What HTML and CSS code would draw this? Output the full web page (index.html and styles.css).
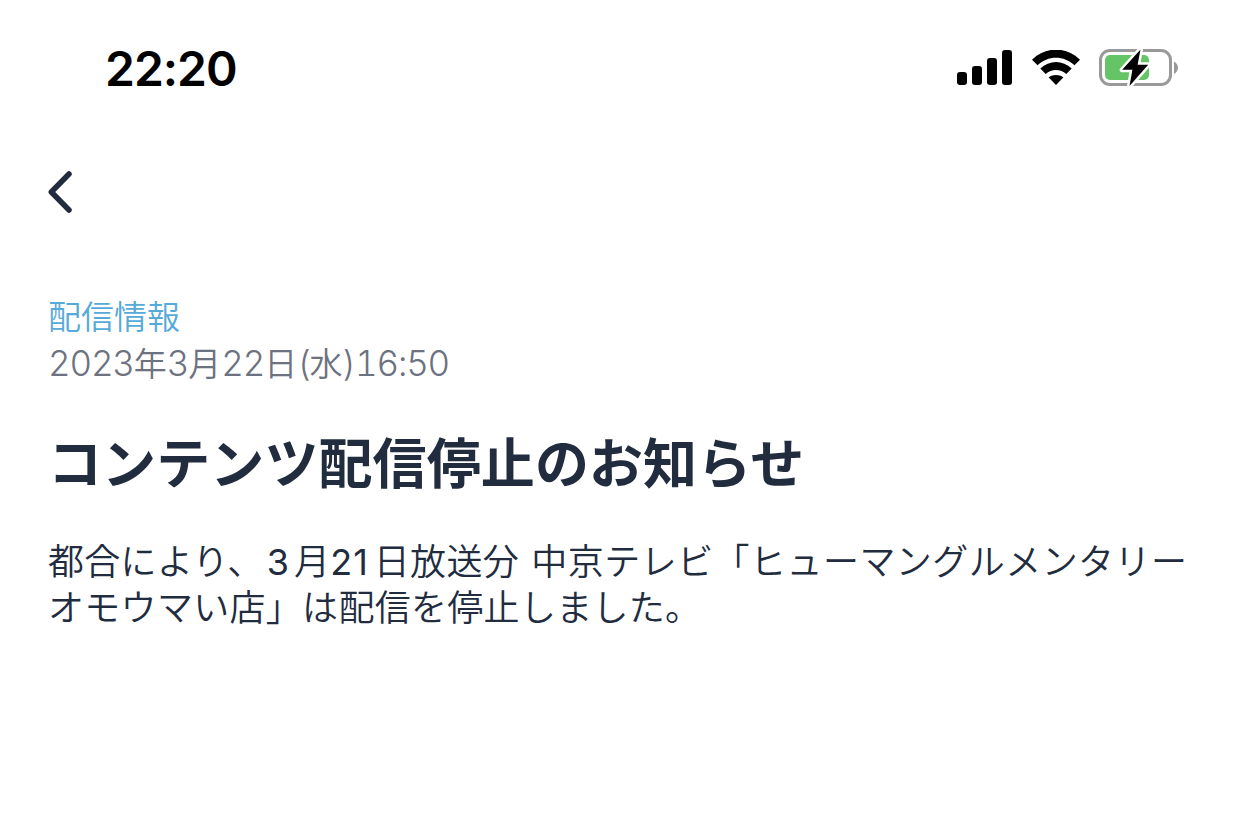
FILE: index.html
```
<!DOCTYPE html>
<html lang="ja">
<head>
    <meta charset="UTF-8">
    <meta name="viewport" content="width=device-width, initial-scale=1.0">
    <title>コンテンツ配信停止のお知らせ</title>
    <link rel="stylesheet" href="styles.css">
</head>
<body>
    <header class="status-bar">
        <span class="clock">22:20</span>
        <div class="status-icons">
            <svg width="56" height="36" viewBox="0 0 56 36">
                <rect x="0" y="22" width="10" height="13" rx="3"/>
                <rect x="15" y="16" width="10" height="19" rx="3"/>
                <rect x="30" y="8" width="10" height="27" rx="3"/>
                <rect x="45" y="0" width="10" height="35" rx="3"/>
            </svg>
            <svg class="wifi" width="48" height="36" viewBox="0 0 48 36">
                <path d="M0 9.8C13.5-3.8 34.5-3.8 48 9.8L42.4 15.3C32.2 5.3 15.8 5.3 5.6 15.3Z"/>
                <path d="M8.3 18.6C17.2 9.9 30.8 9.9 39.7 18.6L34.3 24C28.5 18.6 19.5 18.6 13.7 24Z"/>
                <path d="M16.7 27.5C20.9 24.3 27.1 24.3 31.3 27.5L24 35Z"/>
            </svg>
            <svg class="battery" width="80" height="42" viewBox="0 0 80 42">
                <rect class="battery-case" x="1.5" y="3.5" width="70" height="34" rx="9.5"/>
                <rect class="battery-level" x="6" y="8" width="44" height="25" rx="5"/>
                <path class="battery-tip" d="M75 14.5C80.3 17 80.3 24.5 75 27Z"/>
                <path class="bolt" d="M41.5 2.5L23.2 22.8H33.4L30.5 39L49.2 17.8H38.6Z"/>
            </svg>
        </div>
    </header>

    <nav class="nav">
        <a class="back" href="#" aria-label="戻る">
            <svg width="24" height="44" viewBox="0 0 24 44">
                <path d="M21 4L3.3 22L21 40"/>
            </svg>
        </a>
    </nav>

    <main class="notice">
        <div class="category">配信情報</div>
        <div class="date"><span class="digit">2023</span>年<span class="digit">3</span>月<span class="digit">22</span>日<span class="digit">(</span>水<span class="digit">)16:50</span></div>
        <h1 class="title">コンテンツ配信停止のお知らせ</h1>
        <p class="text">都合により、<span class="num month">3</span>月<span class="num day">21</span>日放送分 <span class="program">中京テレビ「ヒューマングルメンタリー</span><br>オモウマい店」は配信を停止しました。</p>
    </main>
</body>
</html>
```
FILE: styles.css
```
body {
    margin: 0;
    background-color: #fff;
    color: #222c3f;
    font-family: "Noto Sans CJK JP", sans-serif;
}
svg {
    display: block;
}
.status-bar {
    display: flex;
    justify-content: space-between;
    align-items: center;
    height: 136px;
    padding: 0 63px 0 105px;
    box-sizing: border-box;
    color: #000;
}
.clock {
    font-family: Inter, sans-serif;
    font-size: 48px;
    font-weight: 600;
    letter-spacing: -1px;
}
.status-icons {
    display: flex;
    align-items: center;
}
.wifi {
    margin-left: 19px;
}
.battery {
    margin-left: 19px;
}
.battery-case {
    fill: none;
    stroke: #999;
    stroke-width: 3;
}
.battery-level {
    fill: #65c466;
}
.battery-tip {
    fill: #999;
}
.bolt {
    stroke: #fff;
    stroke-width: 5;
    stroke-linejoin: round;
    paint-order: stroke;
}
.nav {
    display: flex;
    height: 112px;
    padding: 0 48px;
    align-items: center;
}
.back path {
    fill: none;
    stroke: #222c3f;
    stroke-width: 5.5;
    stroke-linecap: round;
    stroke-linejoin: round;
}
.notice {
    padding: 45px 48px 0;
    white-space: nowrap;
}
.category,
.date {
    font-size: 33px;
    font-weight: 350;
    line-height: 46px;
}
.category {
    margin: -1px 0 1px;
    color: #56aad8;
}
.date {
    color: #6d7280;
}
.digit {
    font-family: Inter, sans-serif;
    font-size: 35px;
    font-weight: 300;
    line-height: 1;
    letter-spacing: -1.2px;
    font-variant-numeric: tabular-nums;
}
.title {
    margin: 44px 0 0;
    font-size: 54px;
    font-weight: 700;
    line-height: 64px;
    letter-spacing: 0.1px;
}
.text {
    margin: 43px 0 0;
    font-size: 36px;
    font-weight: 350;
    line-height: 46px;
    letter-spacing: 0.3px;
    word-spacing: 4px;
}
.num {
    font-family: Inter, sans-serif;
    font-weight: 400;
    line-height: 1;
    letter-spacing: 1px;
}
.month {
    padding: 0 4px 0 3px;
}
.day {
    padding: 0 5px 0 0;
}
.program {
    letter-spacing: 0.45px;
}
```
